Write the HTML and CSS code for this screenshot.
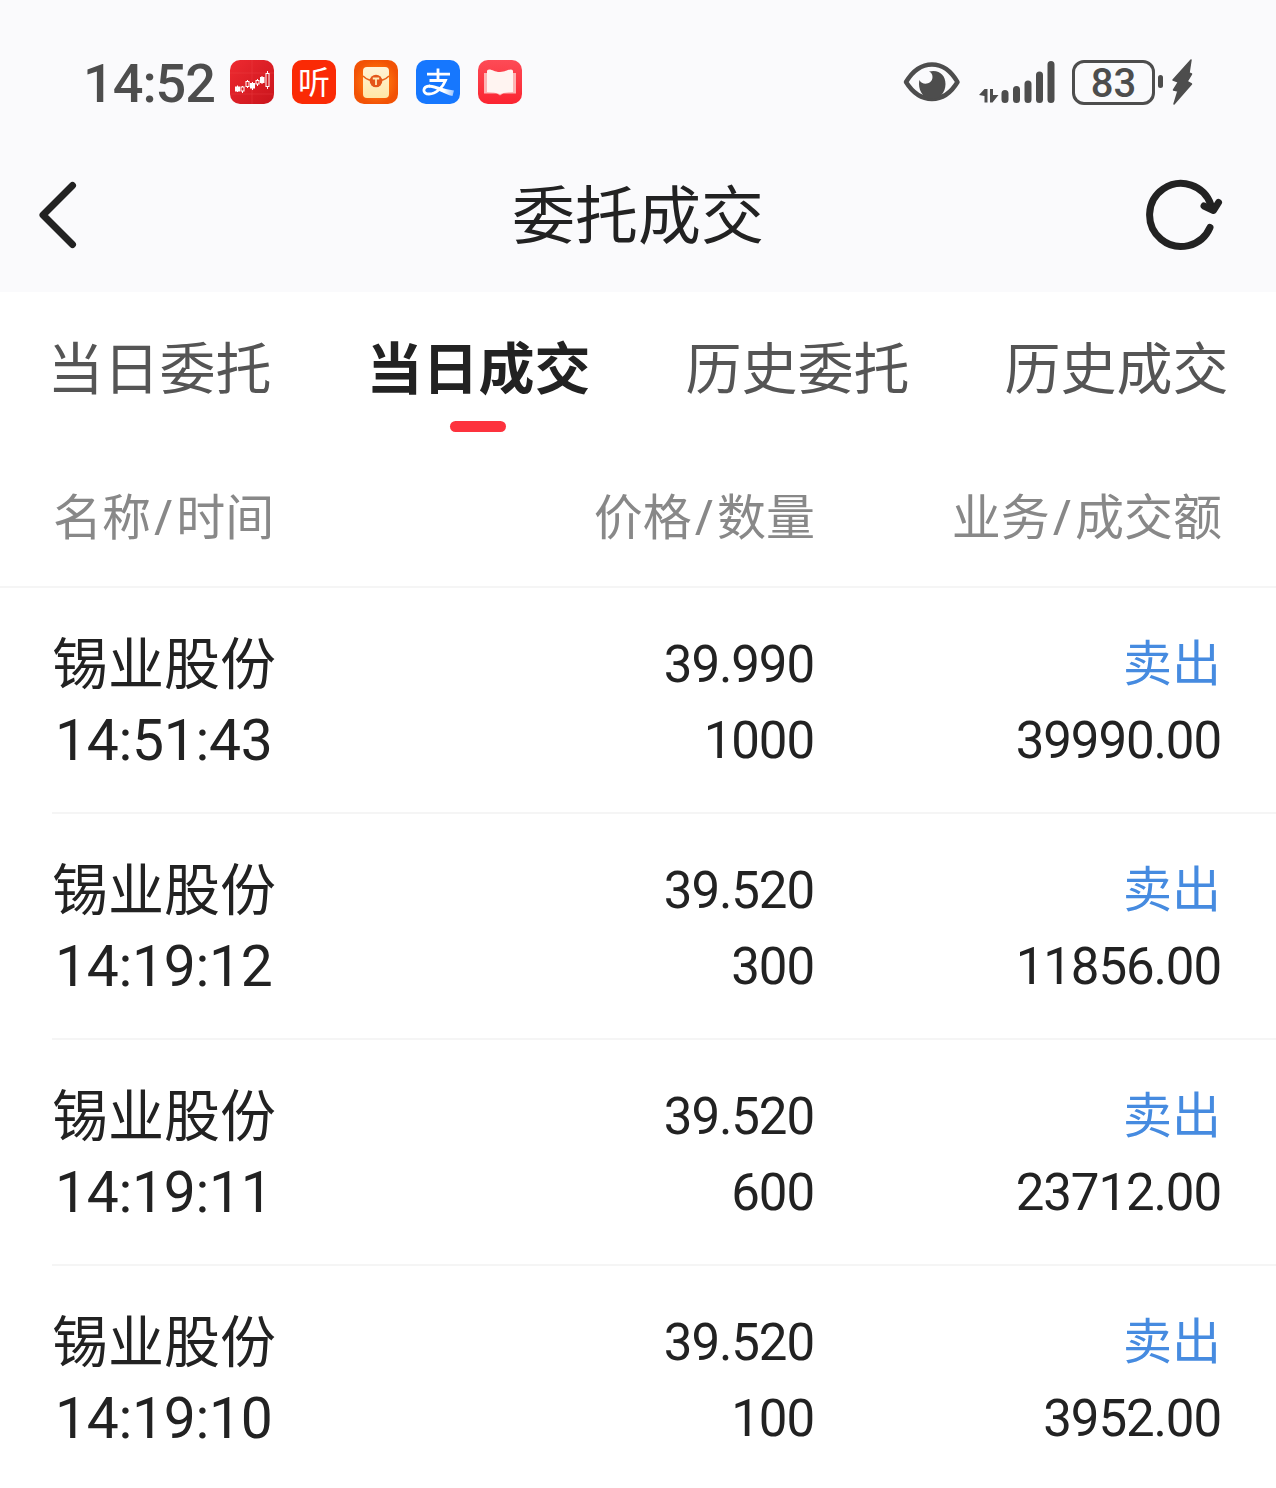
FILE: index.html
```html
<!DOCTYPE html>
<html lang="zh-CN">
<head>
  <meta charset="UTF-8">
  <meta name="viewport" content="width=device-width, initial-scale=1.0">
  <title>委托成交</title>
  <link rel="stylesheet" href="styles.css">
</head>
<body>
  <header class="top">
    <div class="status-bar">
      <span class="clock">14:52</span>
      <div class="apps">
        <!-- 股票 -->
        <svg class="app" viewBox="0 0 44 44">
          <defs>
            <linearGradient id="g-stock" x1="0" y1="0" x2="1" y2="1">
              <stop offset="0" stop-color="#ee2a30"/>
              <stop offset="1" stop-color="#c9141c"/>
            </linearGradient>
          </defs>
          <rect width="44" height="44" rx="10" fill="url(#g-stock)"/>
          <path d="M0 13H44M0 34H44M22 0V44" stroke="#f0484b" stroke-width=".6" opacity=".6"/>
          <g stroke="#fff" stroke-width="1" fill="none">
            <path d="M7.500 25.500V32M12.500 26V33M17.500 20V28M22.500 22V30M27.500 19V26M32 16V24M37.500 11V29"/>
            <rect x="5.500" y="27" width="4" height="4" fill="#fff"/>
            <rect x="11" y="27" width="3" height="4" fill="#dd2027"/>
            <rect x="16" y="21.500" width="3" height="5" fill="#dd2027"/>
            <rect x="20.500" y="23.500" width="4" height="4.500" fill="#fff"/>
            <rect x="26" y="20.500" width="3" height="3.500" fill="#dd2027"/>
            <rect x="30.500" y="17.500" width="3.500" height="5" fill="#fff"/>
            <rect x="36" y="13.500" width="3" height="13" fill="#d5191f"/>
          </g>
        </svg>
        <!-- 听 -->
        <svg class="app" viewBox="0 0 44 44">
          <rect width="44" height="44" rx="10" fill="#fa2a05"/>
          <text class="glyph" x="22" y="33.500" font-size="32" text-anchor="middle">听</text>
        </svg>
        <!-- 红包 -->
        <svg class="app" viewBox="0 0 44 44">
          <defs>
            <radialGradient id="g-packet">
              <stop offset="0" stop-color="#ff8a14"/>
              <stop offset=".6" stop-color="#fb6c0c"/>
              <stop offset="1" stop-color="#f25205"/>
            </radialGradient>
            <linearGradient id="g-paper" x1="0" y1="0" x2="0" y2="1">
              <stop offset="0" stop-color="#fff3d8"/>
              <stop offset="1" stop-color="#ffe7a6"/>
            </linearGradient>
          </defs>
          <rect width="44" height="44" rx="10" fill="url(#g-packet)"/>
          <rect x="9" y="7" width="26" height="31" rx="4" fill="url(#g-paper)"/>
          <path d="M9 16Q14 21 22 21T35 16" fill="none" stroke="#e8601a" stroke-width="1.500"/>
          <circle cx="22" cy="21" r="6.300" fill="#e4561a"/>
          <path d="M18.800 18.500H25.200M22 18.500V25" stroke="#ffe9b8" stroke-width="1.800" fill="none"/>
        </svg>
        <!-- 支付 -->
        <svg class="app" viewBox="0 0 44 44">
          <defs>
            <linearGradient id="g-tail" x1="0" y1="0" x2="1" y2="0">
              <stop offset=".6" stop-color="#fff"/>
              <stop offset="1" stop-color="#fff" stop-opacity=".55"/>
            </linearGradient>
          </defs>
          <rect width="44" height="44" rx="10" fill="#1677fe"/>
          <path d="M11 14.200H34M22 8.500V20M13.500 20.500H29.500C27 27 20 34 13 34C6 34 6 26.500 14 26" fill="none" stroke="#fff" stroke-width="2.800"/>
          <path d="M13 24.800C19 24.200 25 29 38 30.500L36.500 36C28 34.500 21 28 13 27.500Z" fill="url(#g-tail)"/>
        </svg>
        <!-- 阅读 -->
        <svg class="app" viewBox="0 0 44 44">
          <defs>
            <linearGradient id="g-book" x1="0" y1="0" x2="0" y2="1">
              <stop offset="0" stop-color="#fd4b56"/>
              <stop offset="1" stop-color="#fb2431"/>
            </linearGradient>
          </defs>
          <rect width="44" height="44" rx="10" fill="url(#g-book)"/>
          <path d="M6 13H38V33.500H25L22 35.500L19 33.500H6Z" fill="#fdb4b4"/>
          <path d="M9 11Q9 9.500 11 9.500C15 9.500 16 12 22 12C28 12 29 9.500 33 9.500Q35 9.500 35 11V32Q28 32 22 34Q16 32 9 32Z" fill="#fff4f1"/>
        </svg>
      </div>
      <div class="indicators">
        <svg class="eye" viewBox="0 0 58 40">
          <path d="M3 20C17-3.500 41-3.500 54.500 20C41 42.500 17 42.500 3 20Z" fill="none" stroke="#4d4d4d" stroke-width="4.500" stroke-linejoin="round"/>
          <path d="M26 9.500C36 7 42.500 13 42.500 22C42.500 31 36 37 29 37C22 37 16 30.500 16 22C16 20.500 16.200 19 16.500 18C19 24 29.500 22.500 29.500 15C29.500 12 28 10.500 26 9.500Z" fill="#4d4d4d"/>
        </svg>
        <svg class="signal" viewBox="0 0 76 44">
          <g stroke="#4d4d4d" stroke-width="7" stroke-linecap="round">
            <path d="M26 33.500V39.500M37.500 29.500V39.500M49 24V39.500M60.500 15V39.500M72 4.500V39.500"/>
          </g>
          <path d="M0 35L5.500 29H8.500V42.500H5.500V36ZM11 29H14V35H19.500L13.500 42.500H11Z" fill="#4d4d4d"/>
        </svg>
        <div class="battery">83</div>
        <svg class="charge" viewBox="0 0 36 48">
          <rect x="0" y="17" width="5" height="13" rx="2.500" fill="#4d4d4d"/>
          <path d="M33 2L15 22L20.500 24L15.500 32L20 33L16 46L33.500 26L29 23.500L33.500 16L31 15Z" fill="#4d4d4d" stroke="#4d4d4d" stroke-width="1.500" stroke-linejoin="round"/>
        </svg>
      </div>
    </div>

    <div class="nav">
      <svg class="back" viewBox="0 0 40 68">
        <path d="M35.500 4.500L6 34L35.500 63.500" fill="none" stroke="#222" stroke-width="7" stroke-linecap="round" stroke-linejoin="round"/>
      </svg>
      <h1>委托成交</h1>
      <svg class="refresh" viewBox="0 0 78 72">
        <path d="M65 48.500A31.500 31.500 0 1 1 66 26" fill="none" stroke="#222" stroke-width="7" stroke-linecap="round"/>
        <path d="M59 27L68.500 31.500L73.500 23.500" fill="#222" stroke="#222" stroke-width="7" stroke-linecap="round" stroke-linejoin="round"/>
      </svg>
    </div>
  </header>

  <nav class="tabs">
    <a class="tab">当日委托</a>
    <a class="tab active">当日成交</a>
    <a class="tab">历史委托</a>
    <a class="tab">历史成交</a>
  </nav>

  <div class="grid table-head">
    <span>名称<i>/</i>时间</span>
    <span class="right">价格<i>/</i>数量</span>
    <span class="right">业务<i>/</i>成交额</span>
  </div>

  <main class="list">
    <div class="grid row">
      <div class="name">锡业股份</div>
      <div class="num">39.990</div>
      <div class="side">卖出</div>
      <div class="time">14:51:43</div>
      <div class="num">1000</div>
      <div class="num">39990.00</div>
    </div>
    <div class="grid row">
      <div class="name">锡业股份</div>
      <div class="num">39.520</div>
      <div class="side">卖出</div>
      <div class="time">14:19:12</div>
      <div class="num">300</div>
      <div class="num">11856.00</div>
    </div>
    <div class="grid row">
      <div class="name">锡业股份</div>
      <div class="num">39.520</div>
      <div class="side">卖出</div>
      <div class="time">14:19:11</div>
      <div class="num">600</div>
      <div class="num">23712.00</div>
    </div>
    <div class="grid row">
      <div class="name">锡业股份</div>
      <div class="num">39.520</div>
      <div class="side">卖出</div>
      <div class="time">14:19:10</div>
      <div class="num">100</div>
      <div class="num">3952.00</div>
    </div>
  </main>
</body>
</html>
```
FILE: styles.css
```css
* { box-sizing: border-box; }
body {
  margin: 0;
  background: #fff;
  color: #222;
  font-family: 'Noto Sans', 'Noto Sans CJK SC', sans-serif;
}
svg { display: block; flex: none; }
.top {
  height: 292px;
  background: #fafafc;
}

/* 状态栏 */
.status-bar {
  display: flex;
  align-items: center;
  height: 140px;
  padding: 24px 82px 0 83px;
  color: #4d4d4d;
}
.clock {
  width: 147px;
  padding-top: 3px;
  font-family: Roboto, sans-serif;
  font-size: 54px;
  font-weight: 500;
  line-height: 60px;
  letter-spacing: -1px;
}
.apps {
  display: flex;
  gap: 18px;
}
.app { width: 44px; height: 44px; overflow: visible; }
.glyph {
  fill: #fff;
  font-family: 'Noto Sans CJK SC', sans-serif;
}
.indicators {
  display: flex;
  align-items: center;
  margin-left: auto;
}
.eye { width: 58px; height: 40px; margin-right: 18px; }
.signal { width: 76px; height: 44px; margin-right: 17px; }
.battery {
  width: 83px;
  height: 45px;
  border: 3.5px solid #4d4d4d;
  border-radius: 12px;
  font-family: Roboto, sans-serif;
  font-size: 40px;
  font-weight: 500;
  line-height: 42px;
  text-align: center;
}
.charge { width: 36px; height: 48px; margin-left: 3px; }

/* 标题栏 */
.nav {
  display: grid;
  grid-template-columns: 1fr auto 1fr;
  align-items: center;
  height: 150px;
  padding: 0 53px 0 37px;
}
.back { width: 40px; height: 68px; }
.refresh { width: 78px; height: 72px; justify-self: end; }
h1 {
  margin: -2px 0 0 16px;
  font-size: 63px;
  font-weight: 400;
  line-height: 80px;
}

/* 标签 */
.tabs {
  display: flex;
  height: 154px;
}
.tab {
  display: flex;
  flex: 1;
  flex-direction: column;
  align-items: center;
  padding-top: 35px;
  color: #555;
  font-size: 56px;
  line-height: 80px;
  white-space: nowrap;
}
.tab.active { color: #222; font-weight: 700; }
.tab.active::after {
  content: '';
  width: 56px;
  height: 11px;
  margin: 14px 1px 0 0;
  border-radius: 6px;
  background: #fd323d;
}

/* 成交列表 */
.grid {
  display: grid;
  grid-template-columns: 362px 400px 407px;
}
.table-head {
  height: 142px;
  padding: 30px 0 0 53px;
  border-bottom: 2px solid #f5f5f5;
  color: #888;
  font-size: 49px;
  line-height: 80px;
}
.table-head i { padding: 0 4px 0 3px; font-style: normal; }
.right { text-align: right; }
.row {
  grid-auto-rows: 76px;
  align-content: start;
  height: 226px;
  margin-left: 52px;
  padding-top: 36px;
  border-bottom: 2px solid #f5f5f5;
  line-height: 76px;
}
.row:last-child { border-bottom: none; }
.name { font-size: 56px; }
.time, .num { font-family: Roboto, sans-serif; }
.time {
  padding: 3px 0 0 3px;
  font-size: 57px;
  letter-spacing: -0.3px;
}
.num {
  padding-top: 3px;
  font-size: 51px;
  letter-spacing: -1.1px;
  text-align: right;
}
.side { color: #468be0; font-size: 49px; text-align: right; }
```
